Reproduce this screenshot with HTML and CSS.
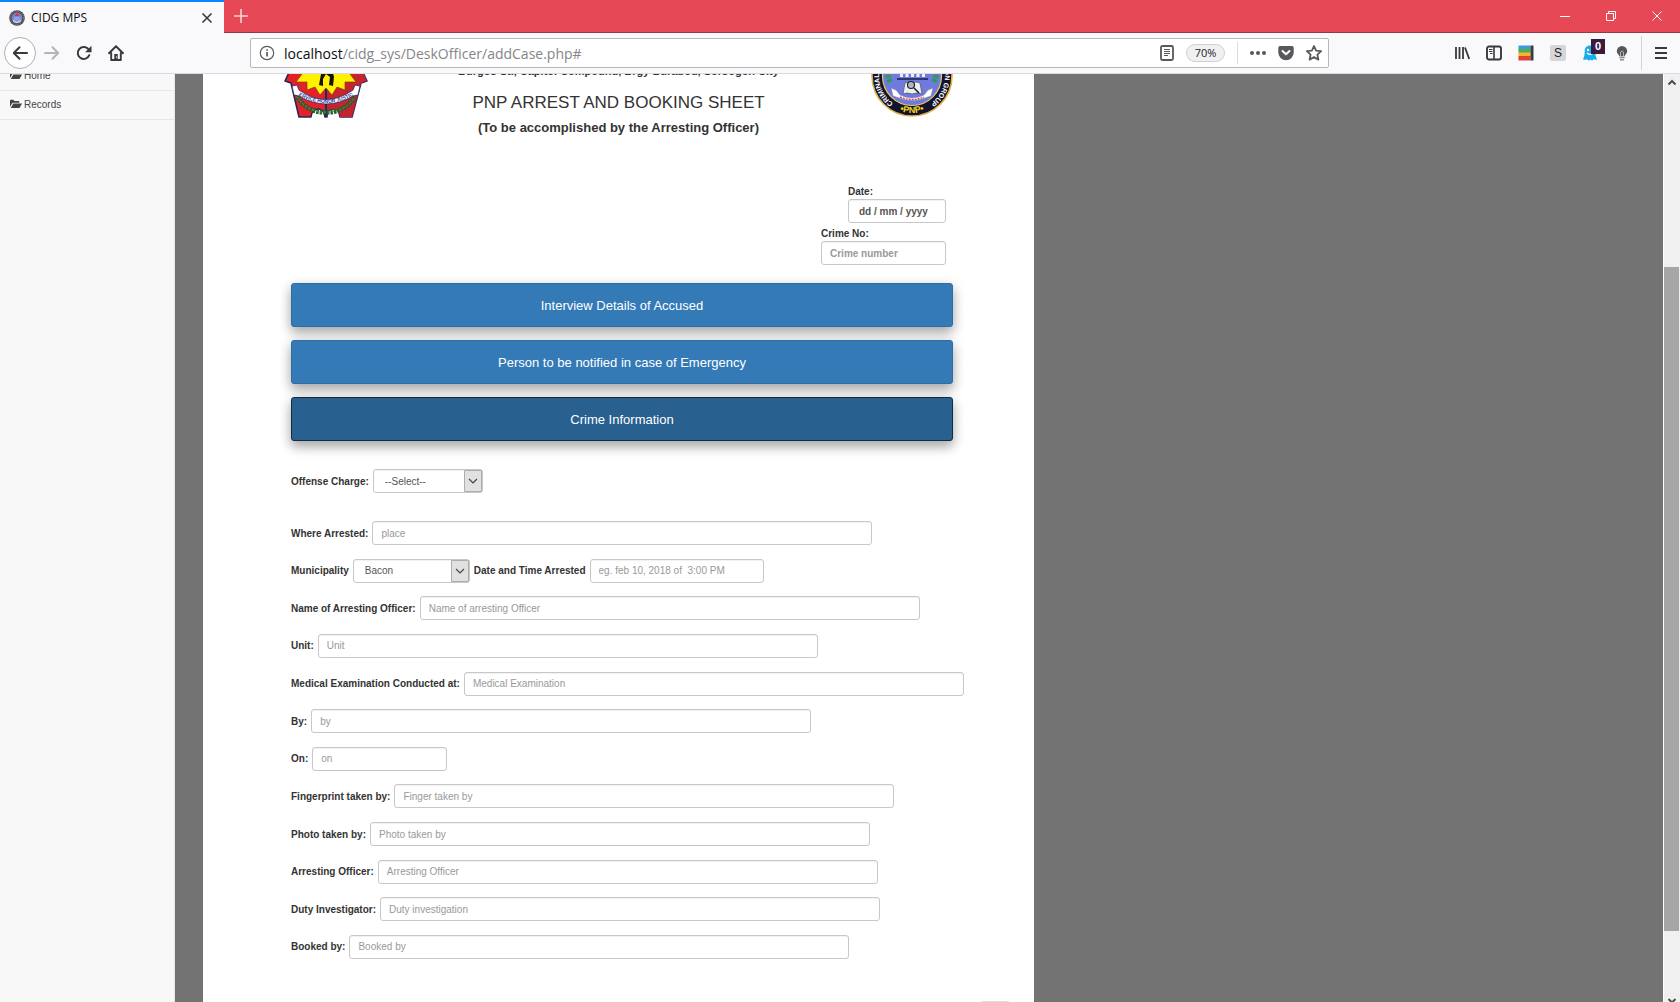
FILE: index.html
```html
<!DOCTYPE html>
<html lang="en">
<head>
<meta charset="utf-8">
<title>CIDG MPS</title>
<link rel="stylesheet" href="styles.css">
</head>
<body>
<div class="browser">
  <div class="tabbar">
    <div class="tab">
      <svg class="favicon" width="16" height="16" viewBox="0 0 16 16"><circle cx="8" cy="8" r="7.8" fill="#4b4a50"/><circle cx="8" cy="8" r="6.6" fill="none" stroke="#8d8468" stroke-width="1" stroke-dasharray="1.2 .8"/><circle cx="8" cy="8" r="5.4" fill="#6f86d8"/><path d="M5 6.500 8 3l3 3.500z" fill="#e03038"/><path d="M5 6.500h6v4H5z" fill="#8ea0e6"/><path d="M4 9.500q4 4 8 0v2q-4 3-8 0z" fill="#c9cdea"/></svg>
      <span class="tab-title">CIDG MPS</span>
      <button class="bare" aria-label="Close tab"><svg width="12" height="12" viewBox="0 0 12 12"><path d="M1.500 1.500l9 9M10.500 1.500l-9 9" stroke="#3a3a40" stroke-width="1.600"/></svg></button>
    </div>
    <button class="bare new-tab" aria-label="New tab"><svg width="14" height="14" viewBox="0 0 14 14"><path d="M7 0v14M0 7h14" stroke="#f8d2d5" stroke-width="1.600"/></svg></button>
    <div class="window-controls">
      <button class="bare" aria-label="Minimize"><svg width="10" height="10" viewBox="0 0 10 10"><path d="M0 5.500h10" stroke="#fff"/></svg></button>
      <button class="bare" aria-label="Restore"><svg width="10" height="10" viewBox="0 0 10 10"><path d="M.5 2.500h7v7h-7zM2.500 2.500v-2h7v7h-2" fill="none" stroke="#fff"/></svg></button>
      <button class="bare" aria-label="Close"><svg width="10" height="10" viewBox="0 0 10 10"><path d="M.5.5l9 9M9.500.5l-9 9" stroke="#fff"/></svg></button>
    </div>
  </div>

  <div class="navbar">
    <button class="bare tool back" aria-label="Back"><svg width="16" height="16" viewBox="0 0 16 16"><path d="M15 8H2M7.500 2.300 1.800 8l5.700 5.700" fill="none" stroke="#38383d" stroke-width="2" stroke-linecap="round" stroke-linejoin="round"/></svg></button>
    <button class="bare tool" aria-label="Forward"><svg width="16" height="16" viewBox="0 0 16 16"><path d="M1 8h13M8.500 2.300 14.200 8l-5.700 5.700" fill="none" stroke="#b4b4b7" stroke-width="2" stroke-linecap="round" stroke-linejoin="round"/></svg></button>
    <button class="bare tool" aria-label="Reload"><svg width="16" height="16" viewBox="0 0 16 16"><path d="M13.300 10.200A6 6 0 1 1 12 3.700" fill="none" stroke="#38383d" stroke-width="2" stroke-linecap="round"/><path d="M15.500.8v6.400H9.100z" fill="#38383d"/></svg></button>
    <button class="bare tool" aria-label="Home"><svg width="16" height="16" viewBox="0 0 16 16"><path d="M1 8.200 8 1.300l7 6.900M3.200 8v7h9.600V8" fill="none" stroke="#38383d" stroke-width="1.900" stroke-linecap="round" stroke-linejoin="round"/><path d="M6.300 9h3.400v6H6.300z" fill="#38383d"/><path d="M8 11.500h1v1.200H8z" fill="#fff"/></svg></button>

    <div class="urlbar">
      <svg width="16" height="16" viewBox="0 0 16 16"><circle cx="8" cy="8" r="6.700" fill="none" stroke="#5a5a5e" stroke-width="1.200"/><path d="M7.200 7h1.700v4.500H7.200zM7.200 4.200h1.700v1.600H7.200z" fill="#5a5a5e"/></svg>
      <label class="domain" for="url">localhost</label><input class="url" id="url" type="text" value="/cidg_sys/DeskOfficer/addCase.php#">
      <button class="bare" aria-label="Reader view"><svg width="14" height="16" viewBox="0 0 14 16"><rect x="1" y="1" width="12" height="14" rx="1.500" fill="none" stroke="#58585c" stroke-width="1.800"/><path d="M4 4.500h6M4 6.500h6M4 8.500h6M4 10.500h4" stroke="#58585c"/></svg></button>
      <button class="zoom">70%</button>
      <span class="divider"></span>
      <button class="bare page-actions" aria-label="Page actions"><svg width="16" height="16" viewBox="0 0 16 16"><g fill="#58585c"><circle cx="2" cy="8" r="2"/><circle cx="8" cy="8" r="2"/><circle cx="14" cy="8" r="2"/></g></svg></button>
      <button class="bare" aria-label="Save to Pocket"><svg width="16" height="16" viewBox="0 0 16 16"><path d="M2 1h12a1.700 1.700 0 0 1 1.700 1.700v4.800a7.700 7.700 0 0 1-15.400 0V2.700A1.700 1.700 0 0 1 2 1z" fill="#58585c"/><path d="M4.500 6 8 9.300 11.500 6" fill="none" stroke="#fff" stroke-width="2" stroke-linecap="round" stroke-linejoin="round"/></svg></button>
      <button class="bare star" aria-label="Bookmark"><svg width="16" height="16" viewBox="0 0 16 16"><path d="M8 1l2.100 4.600 5 .6-3.700 3.400 1 5L8 12.100l-4.400 2.500 1-5L.9 6.200l5-.6z" fill="none" stroke="#58585c" stroke-width="1.800" stroke-linejoin="round"/></svg></button>
    </div>

    <div class="extensions">
      <button class="bare" aria-label="Library"><svg width="16" height="16" viewBox="0 0 16 16"><path d="M2 2v12M5.500 2v12M9 2v12M11 2.500 15.200 14" fill="none" stroke="#38383d" stroke-width="1.800"/></svg></button>
      <button class="bare" aria-label="Sidebars"><svg width="16" height="16" viewBox="0 0 16 16"><rect x="1" y="1.500" width="14" height="13" rx="2" fill="none" stroke="#38383d" stroke-width="1.900"/><path d="M8 2v12" stroke="#38383d" stroke-width="1.600"/><path d="M3 4.500h3.500M3 6.500h3.500M4 8.500h2.500" stroke="#38383d"/></svg></button>
      <button class="bare" aria-label="Tab stack"><svg width="16" height="16" viewBox="0 0 16 16"><path d="M.5.5h12V5H.5z" fill="#3e9ad8"/><path d="M.5 4h12v4H.5z" fill="#4fae4c"/><path d="M.5 7.500h12v4H.5z" fill="#f3b62c"/><path d="M.5 11h12v4.500H.5z" fill="#e23f39"/><path d="M12.500.5h3v15h-3z" fill="#3a3c40"/></svg></button>
      <button class="bare s-badge">S</button>
      <button class="bare ghost" aria-label="Ghostery"><svg width="16" height="16" viewBox="0 0 16 16"><path d="M8 .5c3.400 0 5.300 2.300 5.300 5.600 0 4 .4 6.200 1.700 8.100-1.300.9-2.400.6-3.200-.2-.8 1.700-2.300 1.900-3.300.5-1.100 1.500-2.700 1.200-3.600-.5-1 1-2.500 1.200-3.900.2C2.300 12.400 2.700 10 2.700 6.100 2.700 2.800 4.600.5 8 .5z" fill="#16aeea"/><circle cx="6" cy="5" r="1.200" fill="#fff"/><circle cx="10" cy="5" r="1.200" fill="#fff"/><path d="M5 8q3 3 6 0" fill="none" stroke="#fff" stroke-width="1.200"/></svg><span class="count">0</span></button>
      <button class="bare" aria-label="Lights"><svg width="12" height="16" viewBox="0 0 12 16"><path d="M6 1a5.200 5.200 0 0 1 5.200 5.200C11.200 8.500 9 9.500 8.700 11H3.300C3 9.500.8 8.500.8 6.200A5.200 5.200 0 0 1 6 1z" fill="#55565a"/><path d="M4.500 11V7q1.500-2 3 0v4" fill="none" stroke="#b5b5b8"/><path d="M3.300 11.500h5.400v1.800H3.300zM4 14h4v1.500H4z" fill="#8e8e92"/></svg></button>
    </div>
    <button class="bare menu" aria-label="Menu"><svg width="14" height="14" viewBox="0 0 14 14"><path d="M1 2h12M1 7h12M1 12h12" stroke="#38383d" stroke-width="2"/></svg></button>
  </div>

  <div class="viewport">
    <div class="page">
      <nav class="sidebar">
        <a href="#"><svg width="12" height="10" viewBox="0 0 12 10"><path d="M0 8V1.500Q0 .8.800.8h2.600l1 1.200h4.200q.7 0 .7.700v1H3.200q-.8 0-1.200.8z" fill="#444"/><path d="M3.300 4.500H12L9.800 8.500q-.3.500-.8.500H.8z" fill="#444"/></svg>Home</a>
        <a href="#"><svg width="12" height="10" viewBox="0 0 12 10"><path d="M0 8V1.500Q0 .8.800.8h2.600l1 1.200h4.200q.7 0 .7.700v1H3.200q-.8 0-1.200.8z" fill="#444"/><path d="M3.300 4.500H12L9.800 8.500q-.3.500-.8.500H.8z" fill="#444"/></svg>Records</a>
      </nav>

      <main class="sheet">
        <header class="sheet-head">
          <svg class="crest" width="84" height="90" viewBox="0 0 84 90">
            <path d="M10 34 42 6l32 28 9 19-6 2-9 34H56q-1-8-7-8t-6 8h-2q-1-8-7-8t-7 8H15L7 55l-6-2z" fill="#e4202b" stroke="#2b2458" stroke-width="1.600" stroke-linejoin="round"/>
            <path d="M42 6l32 28 9 19-6 2-9 34H56q-1-8-7-8t-6 8h-1z" fill="#c5242e"/>
            <path d="M42 60v29" stroke="#2b2458" stroke-width="2"/>
            <path d="M42 6 46 18 53 9 54 21 64 16 60 27 72 27 64 36 74 41 66 46 72 54 61 54 61 62 53 59 48 67 42 60 36 67 31 59 23 62 23 54 12 54 18 46 10 41 20 36 12 27 24 27 20 16 30 21 31 9 38 18z" fill="#fff200" stroke="#8a3c10" stroke-width=".7"/>
            <path d="M40 30l7 2 1 9 2 8-1 9-4-1 1-8-4-3-3 5v7l-4-1 2-11-3-2 1-3 4 1z" fill="#17140c"/>
            <path d="M13 69q11 16 29 15 18 1 29-15" fill="none" stroke="#24602f" stroke-width="5" stroke-dasharray="2.500 1"/>
            <path d="M13 69q11 16 29 15 18 1 29-15" fill="none" stroke="#67a04c" stroke-width="1" stroke-dasharray="2 2"/>
            <path d="M8 58l5-1 2 5q27 19 54 0l2-5 5 1-2 9-5 1q-27 16-54 0l-5-1z" fill="#fff" stroke="#2b2458" stroke-width=".8"/>
            <path id="motto" d="M13 66.500q29 17 58 0" fill="none"/>
            <text class="crest-text"><textPath href="#motto" startOffset="50%">SERVICE HONOR JUSTICE</textPath></text>
          </svg>
          <div class="titles">
            <p class="address">Burgos St., Capitol Compound, Brgy Burabod, Sorsogon City</p>
            <h1>PNP ARREST AND BOOKING SHEET</h1>
            <h2>(To be accomplished by the Arresting Officer)</h2>
          </div>
          <svg class="crest" width="84" height="90" viewBox="0 0 84 90">
            <circle cx="43" cy="48" r="40" fill="#12142c" stroke="#e0b347" stroke-width="1.600"/>
            <circle cx="43" cy="48" r="29.500" fill="#6f7bdc" stroke="#e8c96a" stroke-width="1.200"/>
            <path d="M27 30 43 21l16 9z" fill="#e33a3a"/>
            <path d="M30 31h26v3H30zM31 34h3v15h-3zM36.500 34h3v15h-3zM42 34h3v15h-3zM47.500 34h3v15h-3zM53 34h3v15h-3z" fill="#f2f3fb"/>
            <path d="M28 50h31v2H28z" fill="#30366e"/>
            <path d="M21 54q-5-10 3-18M65 54q5-10-3-18" fill="none" stroke="#2c9a47" stroke-width="5" stroke-dasharray="3 1"/>
            <path d="M36 55q4-2 7 0 4-2 8 0l2 11q-5-2-10 0-5-2-9 0z" fill="#eceef2" stroke="#555b78" stroke-width=".8"/>
            <circle cx="42" cy="57" r="3.500" fill="#aeb7c4" stroke="#222" stroke-width="1.200"/><path d="M45 60l5 5" stroke="#222" stroke-width="1.600"/>
            <path d="M22 60l5 2 4 5q12 6 24 0l4-5 5-2-2 8-6 2q-13 5-26 0l-6-2z" fill="#fff" stroke="#7d83aa" stroke-width=".6"/>
            <path d="M31 69q12 5 24 0" fill="none" stroke="#d44b57" stroke-width="1.400" stroke-dasharray="2 1"/>
            <path id="ring" d="M30 78.300A33 33 0 1 1 56 78.300" fill="none"/>
            <path id="ring-foot" d="M25 80.300A37 37 0 0 0 61 80.300" fill="none"/>
            <text class="ring-text"><textPath href="#ring" startOffset="50%">CRIMINAL INVESTIGATION &amp; DETECTION GROUP</textPath></text>
            <text class="foot-text"><textPath href="#ring-foot" startOffset="50%">•PNP•</textPath></text>
          </svg>
        </header>

        <form class="booking">
          <div class="case-id">
            <div class="stack">
              <label for="date">Date:</label>
              <input class="field date" id="date" type="text" placeholder="dd / mm / yyyy">
            </div>
            <div class="stack">
              <label for="crime-no">Crime No:</label>
              <input class="field crime-no" id="crime-no" type="text" placeholder="Crime number">
            </div>
          </div>

          <div class="sections">
            <button class="section" type="button">Interview Details of Accused</button>
            <button class="section" type="button">Person to be notified in case of Emergency</button>
            <button class="section active" type="button">Crime Information</button>
          </div>

          <div class="row">
            <label for="offense">Offense Charge:</label>
            <span class="select offense"><select class="field" id="offense"><option>--Select--</option></select><svg width="18" height="22" viewBox="0 0 18 22"><path d="M.5.5h17v21H.5z" fill="#e1e1e1" stroke="#adadad"/><path d="M5 9l4 4 4-4" fill="none" stroke="#444" stroke-width="1.200"/></svg></span>
          </div>

          <div class="rows">
            <div class="row"><label for="where">Where Arrested:</label><input class="field" id="where" type="text" placeholder="place"></div>
            <div class="row">
              <label for="town">Municipality</label>
              <span class="select town"><select class="field" id="town"><option>Bacon</option></select><svg width="18" height="22" viewBox="0 0 18 22"><path d="M.5.5h17v21H.5z" fill="#e1e1e1" stroke="#adadad"/><path d="M5 9l4 4 4-4" fill="none" stroke="#444" stroke-width="1.200"/></svg></span>
              <label for="when">Date and Time Arrested</label><input class="field when" id="when" type="text" placeholder="eg. feb 10, 2018 of  3:00 PM">
            </div>
            <div class="row"><label for="officer-name">Name of Arresting Officer:</label><input class="field" id="officer-name" type="text" placeholder="Name of arresting Officer"></div>
            <div class="row"><label for="unit">Unit:</label><input class="field" id="unit" type="text" placeholder="Unit"></div>
            <div class="row"><label for="medical">Medical Examination Conducted at:</label><input class="field" id="medical" type="text" placeholder="Medical Examination"></div>
            <div class="row"><label for="by">By:</label><input class="field" id="by" type="text" placeholder="by"></div>
            <div class="row"><label for="on">On:</label><input class="field on" id="on" type="text" placeholder="on"></div>
            <div class="row"><label for="finger">Fingerprint taken by:</label><input class="field" id="finger" type="text" placeholder="Finger taken by"></div>
            <div class="row"><label for="photo">Photo taken by:</label><input class="field" id="photo" type="text" placeholder="Photo taken by"></div>
            <div class="row"><label for="officer">Arresting Officer:</label><input class="field" id="officer" type="text" placeholder="Arresting Officer"></div>
            <div class="row"><label for="duty">Duty Investigator:</label><input class="field" id="duty" type="text" placeholder="Duty investigation"></div>
            <div class="row"><label for="booked">Booked by:</label><input class="field" id="booked" type="text" placeholder="Booked by"></div>
          </div>
        </form>
        <div class="sheet-foot"></div>
      </main>
    </div>

    <div class="scrollbar">
      <svg width="16" height="17" viewBox="0 0 16 17"><path d="M4.500 10.500 8 7l3.500 3.500" fill="none" stroke="#505050" stroke-width="2"/></svg>
      <div class="track"><div class="thumb"></div></div>
      <svg width="16" height="17" viewBox="0 0 16 17"><path d="M4.500 7 8 10.500 11.500 7" fill="none" stroke="#505050" stroke-width="2"/></svg>
    </div>
  </div>
</div>
</body>
</html>
```
FILE: styles.css
```css
* { box-sizing: border-box; }

body {
  margin: 0;
  font-family: "Liberation Sans", Arial, sans-serif;
  font-size: 10px;
  color: #333;
}

.browser {
  display: flex;
  flex-direction: column;
  height: 100vh;
  overflow: hidden;
}

.bare {
  display: inline-flex;
  align-items: center;
  justify-content: center;
  padding: 0;
  border: 0;
  background: none;
}

svg { flex: none; display: block; }

/* Tab strip */
.tabbar {
  display: flex;
  flex: none;
  height: 33px;
  background: #e64856;
  border-bottom: 1px solid #8c3b48;
}
.tab {
  display: flex;
  align-items: center;
  width: 224px;
  height: 33px;
  padding: 0 11px 0 9px;
  border-top: 2px solid #0a84ff;
  background: #f9f9fb;
}
.tab-title {
  flex: 1;
  margin-left: 6px;
  font: 12px "Open Sans", sans-serif;
  color: #0c0c0d;
}
.new-tab { width: 34px; }
.window-controls {
  display: flex;
  gap: 36px;
  margin-left: auto;
  padding-right: 18px;
}
.window-controls .bare { width: 10px; }

/* Navigation toolbar */
.navbar {
  display: flex;
  flex: none;
  align-items: center;
  height: 41px;
  padding-left: 4px;
  background: #f9f9fb;
  border-bottom: 1px solid #dadadd;
}
.tool { width: 32px; height: 32px; }
.back {
  border: 1px solid #b0b0b3;
  border-radius: 50%;
  background: #fff;
}
.urlbar {
  display: flex;
  flex: 1;
  align-items: center;
  height: 30px;
  margin-left: 118px;
  padding: 0 6px 0 8px;
  border: 1px solid #b8b8bb;
  border-radius: 2px;
  background: #fff;
}
.domain, .url { font: 14px "Open Sans", sans-serif; }
.domain { margin-left: 9px; color: #0c0c0d; }
.url {
  flex: 1;
  min-width: 0;
  padding: 0;
  border: 0;
  background: none;
  color: #85858a;
}
.zoom {
  width: 39px;
  height: 18px;
  margin: 0 12px;
  padding: 0;
  border: 1px solid #d0d0d3;
  border-radius: 9px;
  background: #f0f0f2;
  font: 11px "Open Sans", sans-serif;
  line-height: 16px;
  color: #222;
}
.divider { width: 1px; height: 22px; background: #dcdcdf; }
.page-actions { margin: 0 12px; }
.star { margin-left: 12px; }

.extensions {
  display: flex;
  margin-left: 117px;
}
.extensions .bare { width: 32px; height: 30px; }
.extensions .s-badge {
  width: 16px;
  height: 16px;
  margin: 7px 8px;
  border-radius: 2px;
  background: #d6d6d8;
  font: 12px "Liberation Sans", sans-serif;
  color: #222;
}
.ghost { position: relative; }
.count {
  position: absolute;
  top: 1px;
  right: 1px;
  width: 14px;
  height: 15px;
  background: #3c1a40;
  font: bold 11px "Liberation Sans", sans-serif;
  line-height: 15px;
  color: #fff;
}
.menu {
  width: 39px;
  height: 34px;
  margin-left: 3px;
  border-left: 1px solid #d4d4d7;
}

/* Scrolled web page */
.viewport {
  display: flex;
  flex: 1;
  min-height: 0;
  overflow: hidden;
  background: #737373;
}
.page {
  display: grid;
  flex: 1;
  grid-template-columns: 175px 28px minmax(0, 831fr) minmax(0, 629fr);
  min-height: calc(100% + 46px);
  margin-top: -46px;
}
.sidebar {
  padding-top: 34px;
  border-right: 1px solid #e7e7e7;
  background: #f8f8f8;
}
.sidebar a {
  display: flex;
  align-items: center;
  gap: 2px;
  height: 29px;
  padding: 0 0 2px 10px;
  border-bottom: 1px solid #e7e7e7;
  color: #444;
  text-decoration: none;
}
.sheet {
  grid-column: 3;
  background: #fff;
}
.sheet-head {
  display: flex;
  justify-content: space-between;
  padding: 0 81px;
}
.titles { padding-top: 34px; text-align: center; }
.titles p, .titles h1, .titles h2 { margin: 0; }
.titles .address {
  margin-bottom: 11px;
  font-size: 11px;
  font-weight: bold;
  line-height: 18px;
}
.titles h1 {
  margin-bottom: 4px;
  font-size: 17px;
  font-weight: normal;
  line-height: 24px;
}
.titles h2 { font-size: 13px; line-height: 18px; }
.crest-text, .ring-text, .foot-text { text-anchor: middle; font-weight: bold; }
.crest-text { font-size: 5px; fill: #2b3c9a; }
.ring-text { font-size: 7px; fill: #fff; }
.foot-text { font-size: 9px; fill: #f5d21f; }

/* Booking form */
.booking { padding: 47px 81px 0 88px; }
.booking label { font-weight: bold; white-space: nowrap; }
.case-id {
  display: flex;
  flex-direction: column;
  align-items: flex-end;
  gap: 3px;
  margin-bottom: 18px;
  padding-right: 7px;
}
.stack { display: flex; flex-direction: column; line-height: 15px; }
.field {
  flex: none;
  width: 500px;
  height: 24px;
  padding: 0 8px;
  border: 1px solid #c8c8c8;
  border-radius: 3px;
  background: #fff;
  box-shadow: inset 0 1px 1px rgba(0, 0, 0, .06);
  font: 10px "Liberation Sans", Arial, sans-serif;
  color: #555;
}
.field::placeholder { color: #999; opacity: 1; }
.case-id .field { font-weight: bold; }
.date { width: 98px; padding-left: 10px; }
.date::placeholder { color: #555; }
.crime-no { width: 125px; }
.on { width: 135px; }
.when { width: 174px; }

.sections {
  display: flex;
  flex-direction: column;
  gap: 13px;
  margin-bottom: 28px;
}
.section {
  height: 44px;
  border: 1px solid #2e6da4;
  border-radius: 3px;
  background: #337ab7;
  box-shadow: 0 6px 11px rgba(0, 0, 0, .22), 0 4px 14px rgba(0, 0, 0, .18);
  font: 13px "Liberation Sans", Arial, sans-serif;
  color: #fff;
}
.section.active { border-color: #122b40; background: #286090; }

.row { display: flex; align-items: center; gap: 4px; }
.rows {
  display: flex;
  flex-direction: column;
  justify-content: space-between;
  min-height: 438px;
  margin-top: 28px;
}
.select { position: relative; }
.select svg { position: absolute; top: 1px; right: 1px; }
.select .field {
  display: block;
  width: 100%;
  padding: 0 22px 0 11px;
  appearance: none;
}
.offense { width: 110px; }
.town { width: 117px; }
.sheet-foot {
  width: 30px;
  height: 24px;
  margin: 42px 24px 0 auto;
  border-radius: 3px;
  background: #ddd;
}

/* Scrollbar */
.scrollbar {
  display: flex;
  flex: none;
  flex-direction: column;
  width: 17px;
  height: calc(100% + 7px);
  border-left: 1px solid #fff;
  background: #f0f0f0;
}
.track {
  display: grid;
  flex: 1;
  grid-template-rows: 176fr 664fr 61fr;
}
.thumb {
  grid-row: 2;
  margin-right: 1px;
  background: #a6a6a6;
}
```
